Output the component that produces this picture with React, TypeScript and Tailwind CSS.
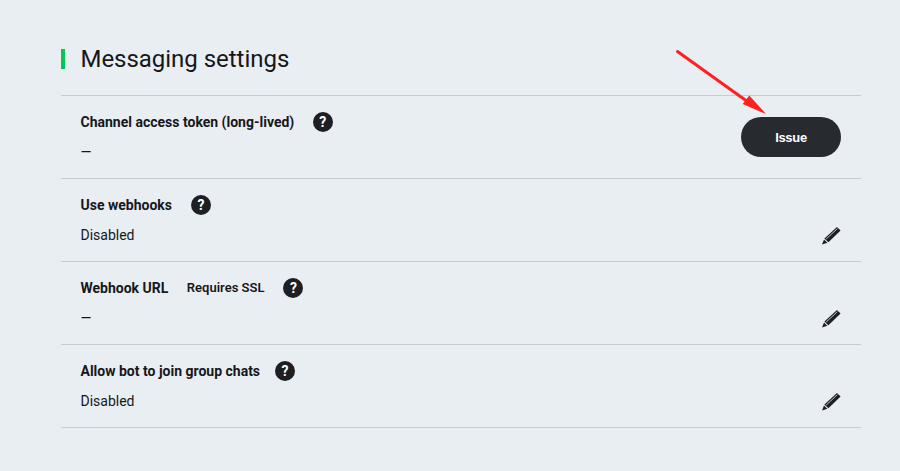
const rows = [
  { label: "Channel access token (long-lived)", value: "—", action: "button", gap: "ml-[18.5px]" },
  { label: "Use webhooks", value: "Disabled", action: "edit", gap: "ml-[19px]" },
  { label: "Webhook URL", note: "Requires SSL", value: "—", action: "edit", gap: "ml-[19px]" },
  { label: "Allow bot to join group chats", value: "Disabled", action: "edit", gap: "ml-[15px]" },
];

function Help({ gap }: { gap: string }) {
  return (
    <span className={`${gap} flex h-5 w-5 items-center justify-center rounded-full bg-[#1e1f22] text-[14px] font-bold leading-none text-white`}>
      ?
    </span>
  );
}

function Pencil() {
  return (
    <svg width="20" height="20" viewBox="0 0 20 20" className="block">
      <path d="M16 2 19.6 5.4 7.4 17.2 3.4 13.6Z" fill="#1e1f22" />
      <path d="M3 14.4 6.4 17.8 1 19.4Z" fill="#1e1f22" />
      <path d="M5.2 14 16.4 3.6" stroke="#e9eef3" strokeWidth="0.8" />
    </svg>
  );
}

export default function App() {
  return (
    <div className="relative h-[471px] w-[900px] overflow-hidden bg-[#e9eef3] pl-[61px] pr-[39px] pt-[49px] font-['Roboto',sans-serif] text-[#16171a]">
      <div className="mb-[26px] flex h-5 items-center border-l-4 border-[#06c755] pl-[15.5px]">
        <h1 className="text-[24px] font-normal leading-5 tracking-[-0.03px]">Messaging settings</h1>
      </div>
      <div className="border-t border-[#c8ccd0]">
        {rows.map((r) => (
          <div key={r.label} className="flex h-[83px] justify-between border-b border-[#c8ccd0] pl-[19.5px] pr-5">
            <div className="pt-[16px]">
              <div className="flex h-5 items-center text-[14px] font-bold">
                <span>{r.label}</span>
                {r.note && <span className="ml-[18.5px] text-[13px] font-semibold">{r.note}</span>}
                <Help gap={r.gap} />
              </div>
              <div className="mt-[10px] text-[14px] leading-5">{r.value}</div>
            </div>
            {r.action === "button" ? (
              <div className="pt-[21px]">
                <button className="h-10 w-[100px] rounded-full bg-[#272a2f] pt-[2px] font-['Liberation_Sans',sans-serif] text-[13px] font-bold tracking-[-0.3px] text-white">
                  Issue
                </button>
              </div>
            ) : (
              <div className="flex items-end pb-[16px]">
                <Pencil />
              </div>
            )}
          </div>
        ))}
      </div>
      <svg className="absolute left-[670px] top-[45px]" width="105" height="75" viewBox="0 0 105 75">
        <path d="M7.5 6.5 L 78 57" stroke="#ff2020" strokeWidth="3" strokeLinecap="round" />
        <path d="M96 69 L 72.7 59 L 79.3 50.5 Z" fill="#ff2020" />
      </svg>
    </div>
  );
}
